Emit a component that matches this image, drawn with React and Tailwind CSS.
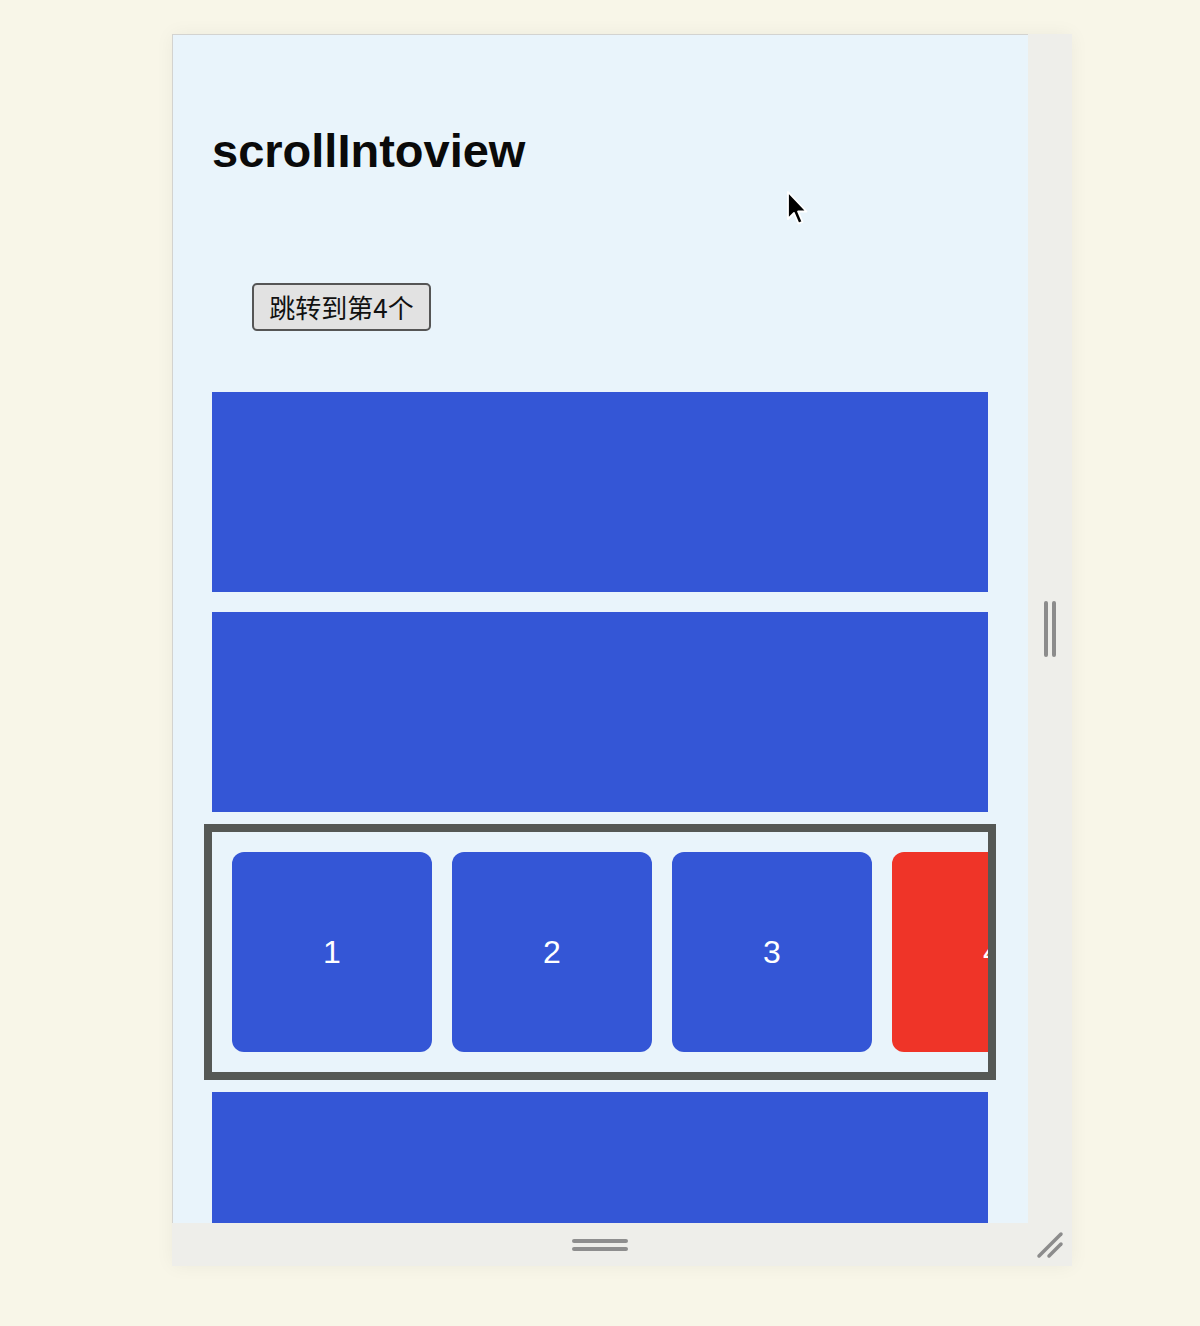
import React from 'react';

const cards = [
  { id: 1, color: 'bg-[#3456d6]' },
  { id: 2, color: 'bg-[#3456d6]' },
  { id: 3, color: 'bg-[#3456d6]' },
  { id: 4, color: 'bg-[#ef3428]' },
  { id: 5, color: 'bg-[#3456d6]' },
];

function Cursor() {
  return (
    <svg className="absolute left-[786px] top-[190px]" width="26" height="40" viewBox="0 0 26 40">
      <path
        d="M2 2 L2 29 L8 23 L12.5 33.5 L16.5 31.8 L12 21.5 L20.5 21.5 Z"
        fill="#000"
        stroke="#fff"
        strokeWidth="1.8"
        strokeLinejoin="round"
      />
    </svg>
  );
}

export default function App() {
  return (
    <div className="relative min-h-screen bg-[#f8f6e8] pt-[34px] pl-[172px] font-['Liberation_Sans',Arial,sans-serif]">
      <div className="w-[900px] flex flex-col shadow-[0_0_18px_rgba(0,0,0,0.05)]">
        <div className="flex">
          <div className="w-[856px] h-[1189px] overflow-hidden border-t border-l border-[#d3d3d0] bg-[#e9f4fb] pl-[39px] pr-[40px] pt-[89px]">
            <h1 className="text-[47px] leading-[53px] font-bold text-[#0a0a0a]">scrollIntoview</h1>

            <button className="mt-[106px] ml-[40px] h-[48px] w-[179px] rounded-[5px] border-2 border-[#555] bg-[#e2e2e2] text-[26px] text-[#111] font-['Noto_Sans_CJK_SC',sans-serif] leading-none">
              跳转到第4个
            </button>

            <div className="mt-[61px] flex flex-col gap-5">
              <div className="h-[200px] bg-[#3456d6]" />
              <div className="h-[200px] bg-[#3456d6]" />
              <div className="h-[240px] outline-8 outline-solid outline-[#555855] overflow-hidden flex gap-5 p-5">
                {cards.map(card => (
                  <div
                    key={card.id}
                    className={`shrink-0 w-[200px] h-[200px] rounded-xl ${card.color} flex items-center justify-center text-white text-[32px]`}
                  >
                    {card.id}
                  </div>
                ))}
              </div>
              <div className="h-[200px] bg-[#3456d6]" />
            </div>
          </div>
          <div className="w-[44px] bg-[#eeeeea] flex items-center justify-center gap-[4px]">
            <div className="w-[4px] h-[56px] rounded-full bg-[#8c8c8c]" />
            <div className="w-[4px] h-[56px] rounded-full bg-[#8c8c8c]" />
          </div>
        </div>
        <div className="h-[43px] bg-[#eeeeea] flex">
          <div className="w-[856px] flex flex-col items-center justify-center gap-[4px]">
            <div className="w-[56px] h-[4px] rounded-full bg-[#8e8e8e]" />
            <div className="w-[56px] h-[4px] rounded-full bg-[#8e8e8e]" />
          </div>
          <div className="w-[44px] flex items-center justify-center">
            <svg width="30" height="30" viewBox="0 0 30 30">
              <line x1="4" y1="26" x2="26" y2="4" stroke="#8c8c8c" strokeWidth="3.5" strokeLinecap="round" />
              <line x1="14" y1="26" x2="26" y2="14" stroke="#8c8c8c" strokeWidth="3.5" strokeLinecap="round" />
            </svg>
          </div>
        </div>
      </div>
      <Cursor />
    </div>
  );
}
